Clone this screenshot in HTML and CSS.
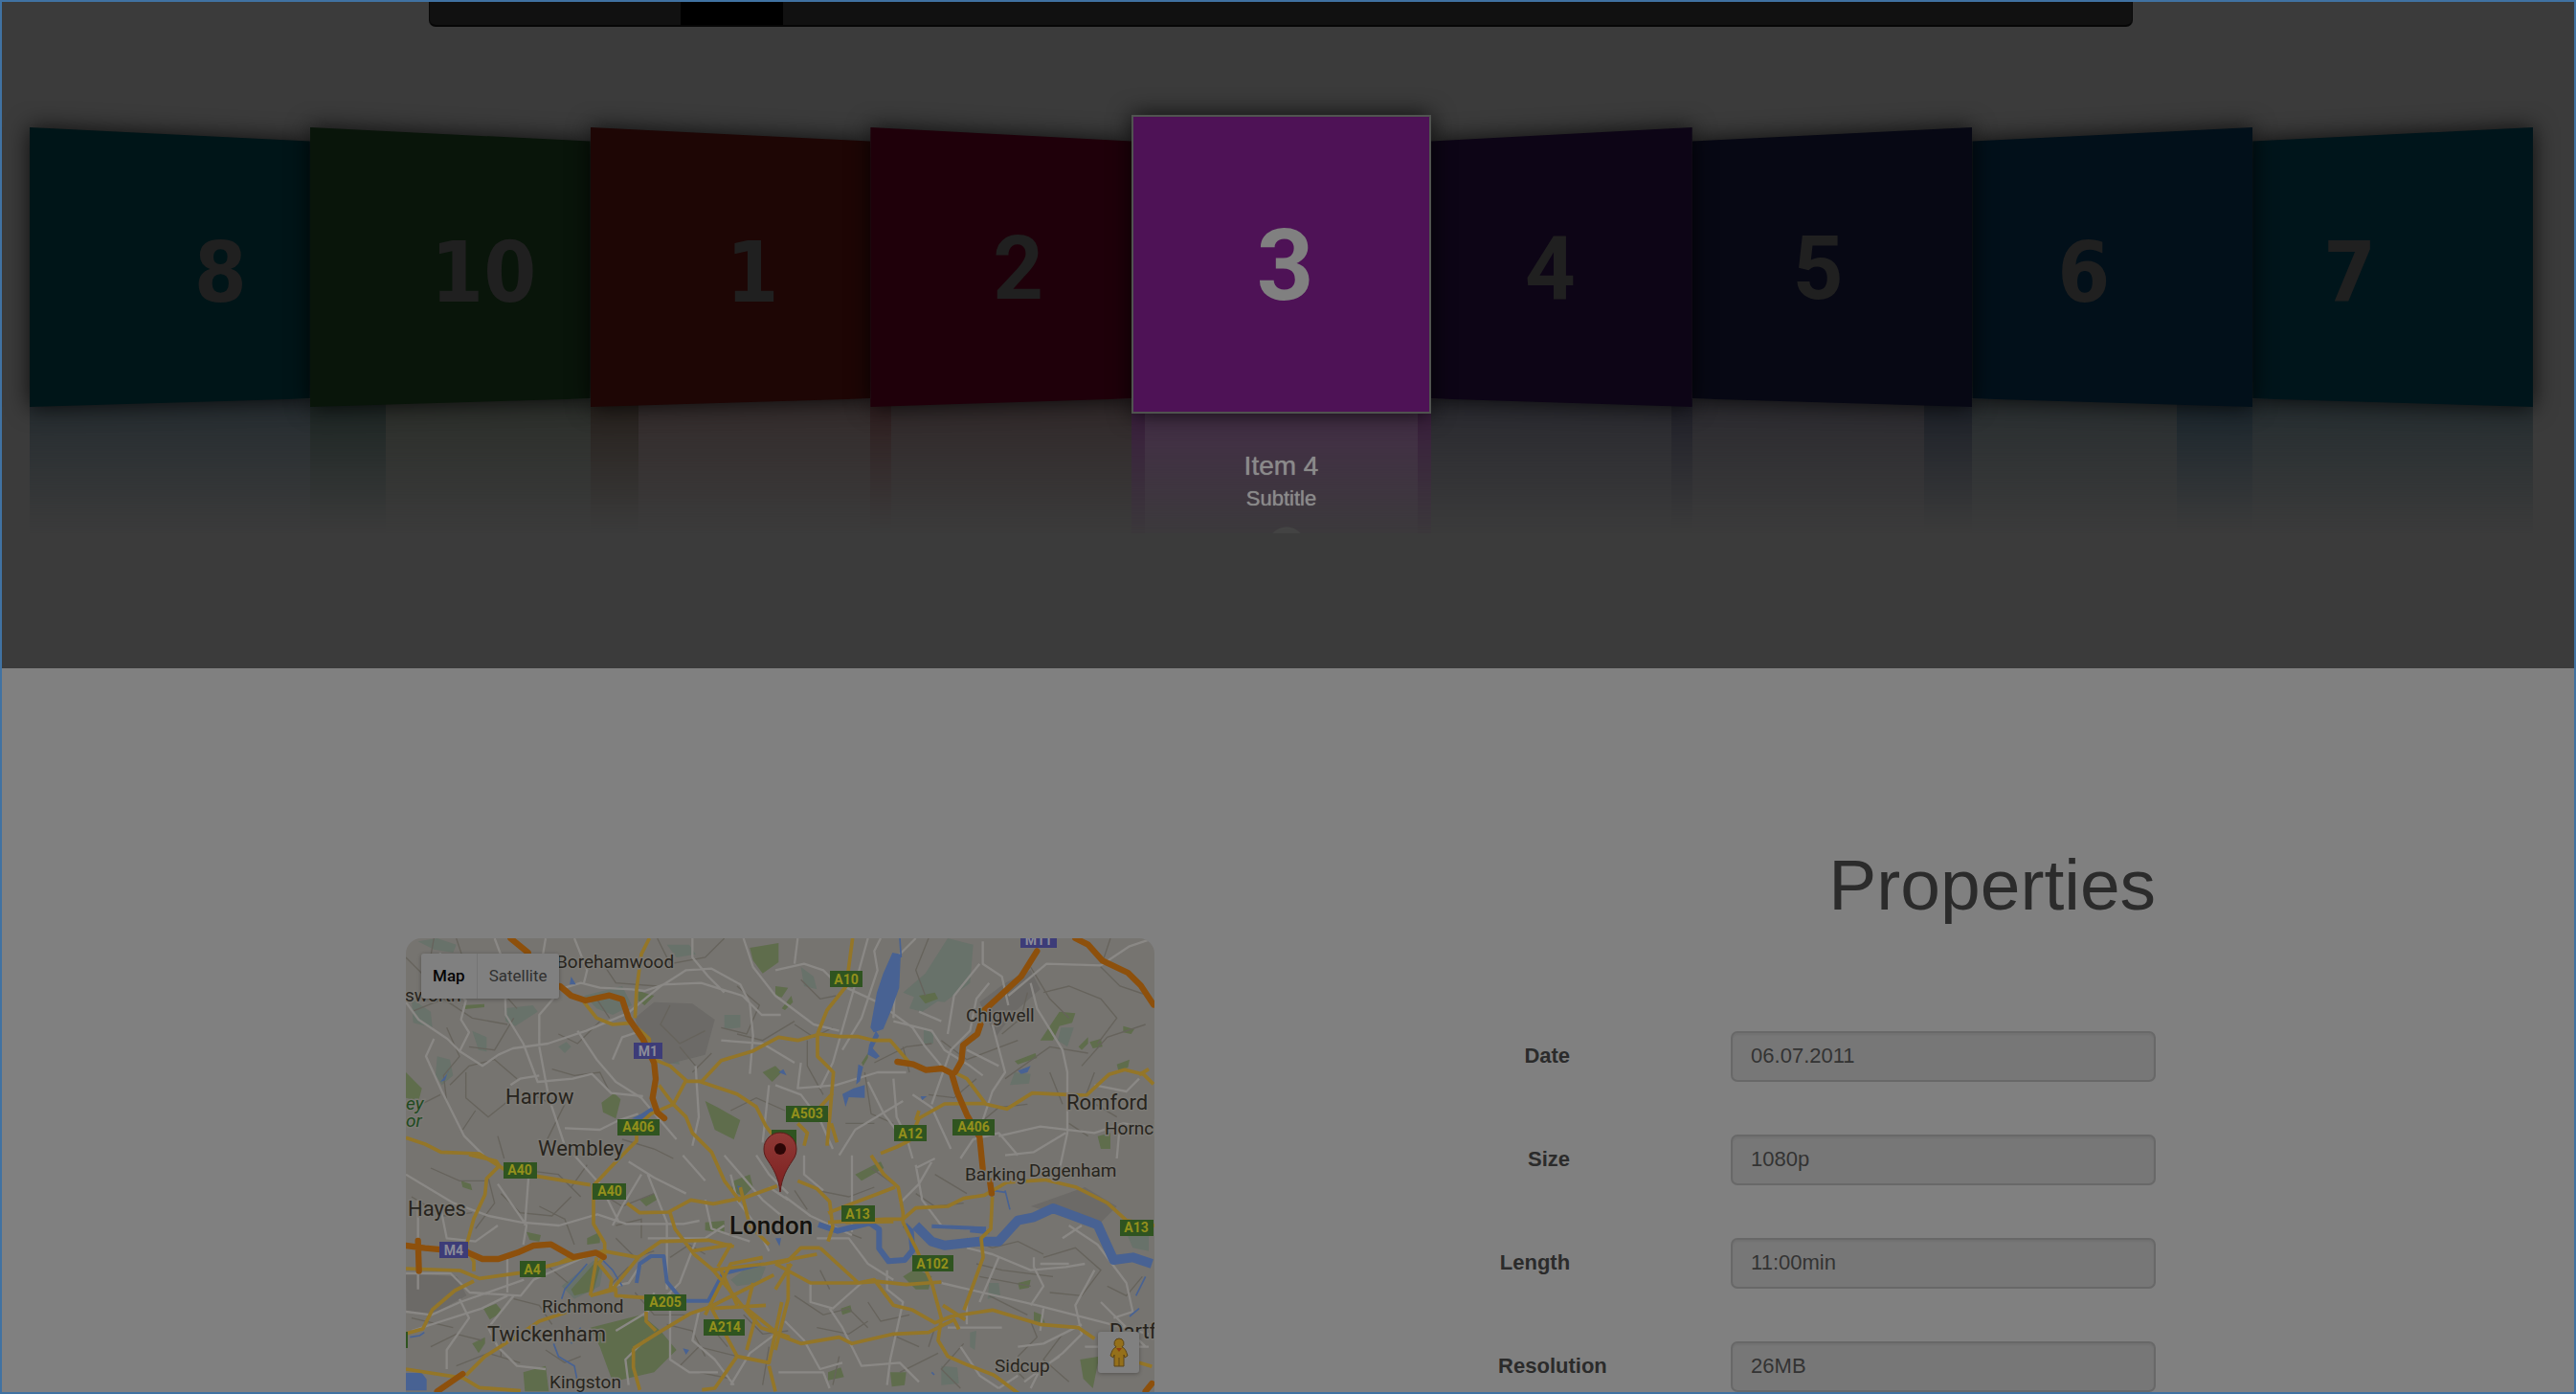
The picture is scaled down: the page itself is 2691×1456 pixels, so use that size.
FILE: index.html
```html
<!DOCTYPE html>
<html lang="en">
<head>
<meta charset="utf-8">
<title>Properties</title>
<link rel="stylesheet" href="styles.css">
</head>
<body>
<header class="hero">
  <nav class="navbar" aria-label="Main"><span class="navbar-active"></span></nav>
  <div class="coverflow">
    <article class="cover left far c8"><div class="shade"><div class="face">8</div></div><div class="reflection"></div></article>
    <article class="cover left mid c10"><div class="shade"><div class="face">10</div></div><div class="reflection"></div></article>
    <article class="cover left near c1"><div class="shade"><div class="face">1</div></div><div class="reflection"></div></article>
    <article class="cover left next c2"><div class="shade"><div class="face narrow">2</div></div><div class="reflection"></div></article>
    <article class="cover current"><div class="shade"><div class="face narrow">3</div></div>
      <div class="reflection"></div>
      <div class="caption"><h2 class="caption-title">Item 4</h2><p class="caption-sub">Subtitle</p></div>
    </article>
    <article class="cover right next c4"><div class="shade"><div class="face narrow">4</div></div><div class="reflection"></div></article>
    <article class="cover right near c5"><div class="shade"><div class="face narrow">5</div></div><div class="reflection"></div></article>
    <article class="cover right mid c6"><div class="shade"><div class="face">6</div></div><div class="reflection"></div></article>
    <article class="cover right far c7"><div class="shade"><div class="face">7</div></div><div class="reflection"></div></article>
  </div>
</header>
<main class="details">
  <section class="map" aria-label="Map of London">
    <svg class="map-canvas" viewBox="0 0 782 476" preserveAspectRatio="xMidYMin slice">
      <defs>
        <linearGradient id="pin" x1="0" y1="0" x2="0" y2="1"><stop offset="0" stop-color="#8f3a36"/><stop offset="1" stop-color="#7d1f1f"/></linearGradient>
      </defs>
      <g transform="scale(.333333) translate(-42 -60)">
        <!-- parks -->
        <g class="wood">
          <path d="M80 70l60-10 60 20-10 25-60-10zM60 250l60 40 5 50-60-15zM350 280l90-10 15 20-70 45-30-15zM600 240l120-30 30 60-60 30-50-20zM250 350l45 20 0 45-25-5zM140 430l40 10 10 50-35 30-20-30zM520 400l25-15 15 15-20 20zM860 80l70 0 20 30-60 10zM1040 300l50 0 0 40-50 5zM850 410l40 15 10 30-40-5z"/>
          <path d="M1740 60l80 20-10 120-80 60-80-10-50-20 70-60zM1640 230l70-10 10 30-60 40-40-10zM2095 340l40 0-20 60-30-20zM1950 480l50 5-5 30-60 5zM1665 340l30 20 0 30-30 0zM1280 150l40 30 10 40-40-10z"/>
          <path d="M530 1150l100-80 30 20-10 60-80 40zM1060 1130l60-45 50 5-20 50-70 10zM1870 1140l30 0 5 40-40 10zM1810 1295l20-5-5 60-15-10zM1720 1400l50 5 5 50-55 5zM2290 960l80 0 0 80-50-10z"/>
        </g>
        <g class="park">
          <path d="M42 480l50 50-10 40-40-10zM220 270l68-4 0 10-60 6zM1120 90l90-15 0 60-50 35-30-40zM770 225l50 15-30 30-20-15zM655 575l40-30 20 20-15 60-40-20zM980 570l40 20 70 40-20 60-60-30zM1160 480l40-20 20 20-30 30zM1200 210l40 5-20 30-20-5zM1220 280l30-40 5 20-25 25zM1650 240l50-10 10 20-40 15z"/>
          <path d="M2030 380l60-90 50 5-10 30-40 10-20 45zM1950 445l65-25 5 15-60 20zM2290 335l35 10-10 15-25-5zM2185 385l35-10 5 25-30 5zM2270 455l40-15-5 25-30 10zM2150 400l30-30 0 20-20 20zM1470 450l20-30 0 15-15 25zM2210 680l40-10 0 50-30 0z"/>
          <path d="M560 1160l80-90 15 5-25 90-60 15zM620 1280l160-40 60 50 50 60-70 70-130 30-40-110zM980 950l60-5 0 40-60-10zM1070 820l50-20 10 40-30 30-40-20zM285 1220l40-15 20 25-40 25zM410 1420l70-20 10 80-75 0zM250 1330l40-20 0 20-20 30zM610 1000l40-20 0 35-40 5zM215 820l30 10 5 20-30-10zM420 980l45 10-5 20-30-5zM775 880l45-20 15 15-40 25z"/>
          <path d="M1600 1120l40-25 50 25-10 40-40 0zM1960 1140l40-10-5 25-30 5zM1405 1220l30-10 5 20-30 10zM1365 1420l40-15 10 30-50 10zM1560 1420l50 0-5 40-40 5zM2010 1230l25 10 10 25-35-5zM2155 1380l60-10-20 100-30-30zM1450 800l80-40 10 20-70 40z"/>
        </g>
        <path class="pale" d="M760 310l60-50 120 5 70 50-30 110-120 30-80-80zM1840 260l80-60 80-40 30 60-80 70-60 80zM42 1110l160 10 30 60-110 60-78-10zM2000 900l170-60 100 60-60 60z"/>
        <!-- minor streets -->
        <path class="lane" d="M42 120l60 60 90 20M200 60l30 90 80 40 80 90M130 60l-20 110M60 290l100-40 90 60 110 20M170 340l40 90-50 60 10 80M380 310l-60 100-80-10M520 360l60 30 70-70M500 470l70 20 80-10 30 60M180 520l60-60 80-20 70 60M230 480l0 80 70 60 100-80M260 600l-40 60M420 540l60 30 80-10M480 700l60-120M90 580l60-30M640 110l60 90 130 10M830 60l40 80 110-20 60-60M870 270l-30 60 60 60 80-40M900 400l50 60M1080 210l70 60-40 90-80-20M1080 360l80 20 100-60M1000 420l-60 60M1060 600l80-40 90 40M720 690l100 30 60 30M330 680l20 70M640 250l40 60"/>
        <path class="lane" d="M1280 190l60 60 50-10M1300 380l0 80 50 90M1510 450l100-50 80-10M1480 480l20 130 70 30M1260 330l60 40 60-30M1600 400l20 80M1680 60l-40 100 30 80M1920 500l140-100 120 20M2000 150l60 100 60 60M2040 230l80-20 100 40 50 60-60 80M2250 60l-30 90 60 60 90 30M2060 480l40 100M2160 460l80-90 120-40M1990 230l-20 80-60 50M1720 380l80 60 160-60M1840 640l60-50 90-10M2200 480l-30 80 100 60M1420 640l90 0M1830 500l-70 60-80-10M2120 640l60 40"/>
        <path class="lane" d="M60 870l100 60 90-10M120 780l90 40 80 0M300 810l20 80-60 80M340 860l60 60 100 10 60-60M440 790l80 10 70 70M460 900l80 40 30 80M560 840l50-70M640 850l80 50 100-40M700 1000l60 60 60-20M700 960l80-20 0 60M420 1110l70-20 60 50M380 1190l80 20 40 60M60 1250l130 30M120 1340l80-40 80 20M200 1400l100-40 100 30M340 1280l0 90M480 1350l60 40 50-20M680 1150l60-60M760 1170l60 70 100 0M870 1060l60-40 50 30M860 1270l80 20 40 80M900 1400l60-60 120 30M1000 1280l50 60M1100 1240l60 60 80-10M1180 1340l-20 120M960 1420l100 20"/>
        <path class="lane" d="M1260 850l40 60M1330 850l100 20 80-30M1370 960l100 40M1500 780l70 50M1640 860l60 40 90-10M1700 800l100 60M1800 1000l80 30 80-20 80 40M1830 1080l80 20 160 20M1840 1120l160 30M1870 1180l120 60M2040 1060l100-30 80 70-60 80-100-10M2240 1150l60 30 50-60M1650 1140l80 0M1260 1180l90 60 80-20 60 60M1330 1280l100 20 60-40M1490 1200l40 60 90-20M1560 1300l90 40M1400 1370l-20 90M1590 1420l120-60M1700 1280l-20 60M1790 1330l-70 80 60 60M2000 1260l20 50-60 60M2100 1300l-60 80 80 70M2220 1300l50 20 60-20M1920 1380l60 60M1340 1100l30 60"/>
        <!-- secondary streets -->
        <g class="street">
          <path d="M42 260l40 55 90 60 40 40 70 45 50-35 45-20 110-15 120-40 130-55 60-50 50-40 120-5 130 40 60 60 60 0M130 375l-25 55 50 110 70 140 60 60M210 415l30-60-25-40 15-60-90-90 10-60M320 60l30 80 5 160 55 90 45 120 110-10 60-15 60 60 100 10M460 390l0-90 60-70M460 400l30 160 50 150M370 520l30-20 60-10M540 215l50-15 60 15 100 5 40 5 60-20 70-45 80-5 90 50 30 60 10 100-10 120M600 200l10-40-40-100M940 60l0 60 50 60 50 50M690 440l30-70 60-20M480 60l-10 60-80 60"/>
          <path d="M580 350l60 90 60 70 80 50 50 60 60 70M540 655l110 5 60-30 60-20M1030 380l130 10 100 60M1180 520l-20 180M950 460l10 160-20 90M1100 60l30 90 70 90 120 90 80 20M1200 160l90-20 60 20 40 40 130 60 110 80 40 60 50 60M1270 60l-10 80M1490 60l-50 180-60 210-40 80M1530 60l-20 40 10 60-50 150-60 100M1640 60l-60 60-10 190M1570 320l120 30 40 60 80 50 40 30M1650 290l70 30M1850 70l0 70 60 40 20 90M1740 360l20-120 80-100M1870 200l-40 50-20 100-60 60-60 170M1930 240l120-100 170 5 90-60 60-20"/>
          <path d="M2000 200l20 80 80 130 15 70 0 190-30 140M1880 330l40 150-40 60-30 90M1800 410l100 50M1280 450l-10 80 120-10 130-40 90 0M1200 520l80 30 60 80 40 90M1570 500l10 120 30 60 20 70M1630 550l60 40 60 130M1490 510l50 100 60 80M1960 740l-60-70-80 20-40 60M1900 680l130-30 170 20 90-30 80 10M2110 670l-100 60-90 10M1400 740l50-80 150-90M2280 640l-10 110M2200 520l100 20 40-40"/>
          <path d="M42 800l50 30 100 60 110 40 100 20 120 10 120-35 90 30 180 0 50-10M330 830l90 130-10 60M430 760l-15 200M80 880l0 280M150 900l20 100 90 10 70-50M42 1110l140 0 60 60 160 10 40-50 180-80M42 1230l80 10 90-40 200-70M210 1190l30 60-70 100 0 60M60 1290l220-70 80-40M380 1180l-80 100 30 60 60 60 90 10M360 1050l0 120M570 740l80 90 60 120M780 800l-60 100-30 60M800 800l60 150 0 210M740 760l80 50 100 50M690 1150l50-10 40-60M800 1000l180 0 60-40M950 1010l-50 130-40 40M700 1290l100-60 20-60M740 1460l-10-80 60-60"/>
          <path d="M870 1170l0 210 60 40 90 0M960 1230l-20 90 70 60 60 80M980 880l20 90 120 40M1180 840l60 40M1200 1300l-80 60-60 100M1060 800l20 80 60 80 40 80M1040 740l120 140 60 50M1140 740l40 60 60 60M910 740l70 80"/>
          <path d="M1290 740l0 60 60 50M1440 740l0 240M1230 870l80 60 130 60M1330 1000l100 0 60 80 80 50M1310 1140l0 60 70 20 90-80M1550 1100l0 60 50 40-40 180-10 80M1230 1260l60 60 50 90 70-20M1370 1220l40 60 60 120 120-10 60 60M1640 780l60-30M1640 770l20 110 60 80 90 10M1800 1030l80 20 120 50 110-10 60-10M1720 1140l300 70 350 90M2010 1060l0 30 30 60-40 60M1800 1270l0-70M1740 1280l170 0M1900 1060l-60 140M2030 1080l90 0M2120 960l90 60 90 120 20 90-60 20M2200 1100l-60 110 20 90-60 60-120 90M2220 1200l80 80 60 60M2040 1220l-10 70M1780 1340l60 90 60 40M1960 1340l80-10 120-60M1210 1420l140 0 20 50M2170 1340l200 0M2000 1470l30-60 60-40M1900 1470l60-40M2100 1000l60-40M1690 760l-40 70-60 60"/>
        </g>
        <!-- water -->
        <g class="water">
          <path d="M1567 105l26 5-5 105-25 70-25 60-30 10-10-15 20-110 20-60zM1515 350l10 15-20 40 22 25-12 8-26-14 5-30zM1460 455l15 8-10 45-12 10zM1445 530l35-10 0 40-50-2-10 30-10-40zM1225 470l10 20-25-10zM150 510l25-30 0-5-10 30zM780 610l30-20 10 10-30 30-40-5zM560 180l15 25-20 0zM1960 475l40-15-10 20-20 5zM1655 555l20 0-15 12zM42 1422l50 0 15 20 0 35-65 0zM910 1345l20 5-10 15zM1200 1000l18 0-5 25zM1080 835l15 5-10 10z"/>
        </g>
        <g class="stream">
          <path d="M1590 60l4 60M560 1330l30-50M530 1190l10-30 70-80M660 1070l30 30 30 50"/><path d="M505 1330l15 40 50 30 10 50"/><path d="M1690 1420l8 8M2360 1120l-30 60M2340 1220l-30 25M1920 850l15 60M1880 850l40 6"/><path d="M55 1310l30-5 15-10"/>
          <path class="creek" d="M765 1140l10-60 35-24 40 0 10 80 50 60 80 0 45-85 120-30M1690 962l170 8M1810 976l60 6"/>
          <path class="river" d="M1335 957l60 20 60-15 40-10 30 20 0 60 30 40 50-4 25-30-5-60-20-20"/>
          <path class="estuary" d="M1640 960l50 50 40 12 110-12 60 0 60-66 50-10 60-28 60 22 80 30 50 110 60-8 60 20"/>
        </g>
        <!-- A roads -->
        <g class="road">
          <path d="M805 60l-25 50-15 110-5 90M600 260l40 50 50 20 60-5 55 50 0 35M820 440l50 20 50 45-40 75-30-40-15-20M880 580l-70 30-45 40 0 45-55 55-80 85 0 120 35 60 0 40M880 580l40 40 20 50 60 60 40 90 50 65M920 508l50 0 60-65 100-30 80-43 60 10 70-20 60 8 60 0 50 12 50 0 60 70M960 508l60 20 60 20 60 40 30 60 30 40M42 685l60 20 50 25 120 5 80 50 30 5M1442 60l-20 150-60 75-30 75 0 70 50 50-10 120-10 110M1330 600l50-55M1270 640l30 30-10 40M1375 640l18 60M1770 485l30 15 60 80 65 15 80-50 110 5 60 2 70-65 50-15 60 15 30 30M2370 470l-30 18M1650 600l-10 30M1860 577l-130 2-80 45-30 70-40 20-50 20"/>
          <path d="M240 738l85 20 10 15-40 40-5 50-35 75-25 90 25 45 0 30M450 805l170 28M735 890l40 30 90-2 70-38 70 12 40-8 60-12 100-36M1270 820l60 25 40 40 10 80-15 45M1365 950l180-10 55 0 40-35 100-5 50-25 65-10 70-40 120-8 95 22 100 50 60 55 110 20M1880 870l-5 100-30 30 6 60-60 165M1500 740l40 60 45 40 15 80 0 30 40 80 50 110 30 110-10 70 30 50 55 24 90 35 80 60 60 40M1365 920l210-80M1420 950l150-2M42 1095l170 6 60 25 130-18 120-30 40-20M255 1134l-60 30-70 60-30 60-53 15M480 1090l70-20 110-30 110 20 70-50 150-4 80 20M665 1050l-18 30 40 50-5 30-60 20M640 1060l-20 120M685 1165l90-110M620 1180l80-20 0 20 90 6M795 1230l0 30 30 30M870 920l15 50 60 80 60 50 90 110 60 70 90 30M1090 840l30 120 60 60M940 1040l120-20-40 70M1000 1100l170-20 160-30M980 1240l80-160 100-20M1000 1220l170-10"/>
          <path d="M42 1410l180 28 50 30 130 10M230 1430l60-60 110-70 60-40 90-30M755 1345l80-50 100-60 60-20 160-80 40-20M755 1345l0 60 20 70M1000 1220l80 150-70 100-40 5M1080 1370l100 20 40-190M1140 1240l-30 110M1110 1220l100 80M1030 1100l50 110M1130 1140l-20 80M1200 1300l80 30 120-20 40 20 130-30 110-5 80-40 15 30M1340 1030l120 110 50-10 60 80 60 15 70 40 50-20 130-20 150 45 120 10 50 35M1340 1030l-60 0-40 40-40 10M1200 1080l110 60 150 0 60-5 90 10 110-8M1725 1210l70 45M1240 1080l0 110-40 160M1200 1160l50-80M1180 1400l20 80M2340 1390l40 12"/>
        </g>
        <g class="motorway">
          <path d="M370 60l55 45M525 210l35 30 45 15 75-16 40 12 20 60 45 65 35 75 5 50-10 60 15 45 22 18M2020 100l-50 80-120 110M1843 330l-10 30-45 35-5 50-20 35M2140 60l40 20 45 50 80 38 40 40 40 60M1582 447l50 8 40 18 50-5 30 15 18 60 30 70 40 70 10 100M1872 820l6 40M42 1023l60 8 130 12 50 22 50 0 60-20 50-22 55-4 70 40 70-14 25 14M80 1008l3 95M140 1480l80-55M2360 1480l20-25"/>
        </g>
      </g>
      <g class="label">
        <text x="157" y="31">Borehamwood</text><text x="-1" y="66">sworth</text><text x="585" y="87">Chigwell</text><text x="730" y="205">Hornch</text><text x="142" y="391">Richmond</text><text x="150" y="470">Kingston</text><text x="584" y="253">Barking</text><text x="651" y="249">Dagenham</text><text x="615" y="453">Sidcup</text>
        <g class="town"><text x="104" y="173">Harrow</text><text x="138" y="227">Wembley</text><text x="690" y="179">Romford</text><text x="2" y="290">Hayes</text><text x="85" y="421">Twickenham</text><text x="735" y="418">Dartf</text></g>
        <text class="city" x="338" y="309">London</text>
        <g class="green"><text x="0" y="179">ey</text><text x="0" y="197">or</text></g>
      </g>
      <g class="shield">
        <g class="m"><rect x="238" y="109" width="30" height="17"/><text x="253" y="123">M1</text><rect x="642" y="-7" width="38" height="17"/><text x="661" y="7">M11</text><rect x="35" y="317" width="30" height="17"/><text x="50" y="331">M4</text></g>
        <rect x="221" y="189" width="44" height="17"/><text x="243" y="202">A406</text>
        <rect x="443" y="34" width="34" height="17"/><text x="460" y="48">A10</text>
        <rect x="397" y="175" width="44" height="17"/><text x="419" y="188">A503</text>
        <rect x="510" y="195" width="34" height="17"/><text x="527" y="209">A12</text>
        <rect x="571" y="189" width="44" height="17"/><text x="593" y="202">A406</text>
        <rect x="382" y="200" width="26" height="17"/>
        <rect x="102" y="234" width="35" height="17"/><text x="119" y="247">A40</text>
        <rect x="195" y="256" width="35" height="17"/><text x="213" y="269">A40</text>
        <rect x="119" y="337" width="27" height="17"/><text x="132" y="351">A4</text>
        <rect x="249" y="372" width="44" height="17"/><text x="271" y="385">A205</text>
        <rect x="311" y="398" width="43" height="17"/><text x="333" y="411">A214</text>
        <rect x="455" y="279" width="35" height="17"/><text x="472" y="293">A13</text>
        <rect x="529" y="331" width="43" height="17"/><text x="550" y="345">A102</text>
        <rect x="746" y="294" width="35" height="17"/><text x="763" y="307">A13</text>
        <rect x="-2" y="411" width="4" height="17"/>
      </g>
      <path class="pin" d="M391 265c-2-16-7-24-13-33-3-4-4-8-4-12a17 17 0 0 1 34 0c0 4-1 8-4 12-6 9-11 17-13 33z"/>
      <circle class="pin-dot" cx="391" cy="220" r="6"/>
    </svg>
    <div class="map-type"><button class="map-btn on" type="button">Map</button><button class="map-btn" type="button">Satellite</button></div>
    <button class="pegman" type="button" aria-label="Street View"><svg width="20" height="32" viewBox="0 0 20 32"><path d="M10 1a5 5 0 0 1 3 9c3 1 4 3 6 9l-3 2-1-3v12H5V18l-1 3-3-2c2-6 3-8 6-9a5 5 0 0 1 3-9z" fill="#95701a" stroke="#5c4517"/><path d="M7 11l3 4 3-4z" fill="#8a3d12"/><path d="M10 21v9" stroke="#5c4517"/></svg></button>
  </section>
  <form class="props">
    <h1 class="props-title">Properties</h1>
    <div class="row"><label class="row-label" for="date">Date</label><input class="row-input" id="date" value="06.07.2011" readonly></div>
    <div class="row"><label class="row-label" for="size">Size</label><input class="row-input" id="size" value="1080p" readonly></div>
    <div class="row"><label class="row-label" for="length">Length</label><input class="row-input" id="length" value="11:00min" readonly></div>
    <div class="row"><label class="row-label" for="resolution">Resolution</label><input class="row-input" id="resolution" value="26MB" readonly></div>
  </form>
</main>
<div class="frame"></div>
</body>
</html>
```
FILE: styles.css
```css
* { box-sizing: border-box; }
body {
  margin: 0;
  background: #808080;
  color: #2b2b2b;
  font-family: "Liberation Sans", Arial, sans-serif;
  font-size: 22px;
}
.frame {
  position: fixed;
  inset: 0;
  border: 2px solid #4072a2;
  pointer-events: none;
  z-index: 20;
}

/* carousel */
.hero { background: #3b3b3b; height: 698px; }
.navbar {
  height: 28px;
  margin: 0 17.2% 0 16.65%;
  padding-left: 262px;
  background: #111;
  border: 1px solid #080808;
  border-bottom: 2px solid #060606;
  border-radius: 0 0 7px 7px;
}
.navbar-active { display: block; width: 107px; height: 100%; background: #000; }
.coverflow {
  display: flex;
  align-items: flex-start;
  padding: 92px 45px 0 31px;
}
.cover { position: relative; flex: 293 1 0; min-width: 0; padding-top: 13px; }
.cover.next { flex-grow: 273; }
.cover.current { flex-grow: 313; padding-top: 0; z-index: 5; }
.next { z-index: 4; }
.near { z-index: 3; }
.mid { z-index: 2; }
.far { z-index: 1; }
.shade { position: relative; z-index: 1; filter: drop-shadow(0 0 12px rgba(0, 0, 0, .8)); }
.face {
  height: 292px;
  padding-top: 108px;
  background: var(--ink);
  color: #202020;
  font: bold 88px/1 "DejaVu Sans Condensed", "DejaVu Sans", sans-serif;
  text-align: center;
}
.face.narrow { padding-top: 102px; font: bold 92px/1 Roboto, sans-serif; }
.left .face { clip-path: polygon(0 0, 100% 5%, 100% 97%, 0 100%); }
.right .face { clip-path: polygon(0 5%, 100% 0, 100% 100%, 0 97%); }
.left.far .face { padding-left: 106px; }
.left.mid .face { padding-left: 70px; }
.left.near .face { padding-left: 46px; }
.left.next .face { padding-left: 36px; }
.right.next .face { padding-right: 24px; }
.right.near .face { padding-right: 30px; }
.right.mid .face { padding-right: 60px; }
.right.far .face { padding-right: 90px; }
.current .face {
  height: 312px;
  padding: 104px 0 0 8px;
  background: #4e1256;
  border: 2px solid #505350;
  color: #808080;
  font-size: 104px;
}
.c8 { --ink: #001518; --glow: #252c30; --overlap: #252c30; --edge: 0%; }
.c10 { --ink: #09150a; --glow: #2b2e2a; --overlap: #1c2523; --edge: 27%; }
.c1 { --ink: #1e0605; --glow: #332b2b; --overlap: #26201c; --edge: 17%; }
.c2 { --ink: #1f000a; --glow: #302829; --overlap: #2e1d1e; --edge: 8%; }
.c4 { --ink: #0d0516; --glow: #29292f; --overlap: #1f1f28; --edge: 8%; }
.c5 { --ink: #070814; --glow: #2b2a2f; --overlap: #1c2028; --edge: 17%; }
.c6 { --ink: #02101a; --glow: #292e30; --overlap: #1a252c; --edge: 27%; }
.c7 { --ink: #00151b; --glow: #252d30; --overlap: #252d30; --edge: 0%; }
.reflection {
  height: 140px;
  margin-top: -8px;
  background: linear-gradient(to right, var(--overlap) var(--edge), var(--glow) var(--edge));
  mask-image: linear-gradient(#000, transparent);
}
.right .reflection { background: linear-gradient(to left, var(--overlap) var(--edge), var(--glow) var(--edge)); }
.current .reflection {
  height: 133px;
  background:
    radial-gradient(circle 20px at 162px 146px, #808080 19px, transparent 20px),
    linear-gradient(to right, #3a1e3d 14px, #442e47 14px, #442e47 calc(100% - 14px), #3a1e3d calc(100% - 14px));
  mask-image: linear-gradient(#000, rgba(0, 0, 0, .1));
}
.caption {
  position: absolute;
  inset: 350px 0 auto;
  z-index: 2;
  text-align: center;
  color: #8a8a8a;
  text-shadow: 0 0 1px #8a8a8a;
}
.caption-title { margin: 0; font-size: 28px; font-weight: 400; line-height: 34px; }
.caption-sub { margin: 0; font-size: 22px; line-height: 34px; }

/* details */
.details {
  display: grid;
  grid-template-columns: 782fr 687fr;
  column-gap: 19.64%;
  align-items: start;
  padding: 0 16.31% 0 15.76%;
}
.map { position: relative; margin-top: 282px; border-radius: 16px 16px 0 0; overflow: hidden; background: #767470; }
.map-canvas { display: block; width: 100%; height: 476px; font-family: Roboto, sans-serif; }
.wood { fill: #68726a; }
.park { fill: #5f6d4c; }
.pale { fill: #6c6a67; }
.lane { fill: none; stroke: #66635c; stroke-width: 4; }
.street { fill: none; stroke: #8a8885; stroke-width: 7; stroke-linejoin: round; }
.water { fill: #486293; }
.stream { fill: none; stroke: #486293; stroke-width: 5; stroke-linejoin: round; }
.creek { stroke-width: 12; }
.river { stroke-width: 18; }
.estuary { stroke-width: 30; }
.road { fill: none; stroke: #947628; stroke-width: 11; stroke-linejoin: round; }
.motorway { fill: none; stroke: #8d500c; stroke-width: 19; stroke-linejoin: round; stroke-linecap: round; }
.label { font-size: 19px; fill: #27241d; stroke: #7b7974; stroke-width: 3px; paint-order: stroke; }
.town { font-size: 22px; }
.city { font-size: 26px; font-weight: 500; fill: #14120e; }
.green { fill: #1f4a1f; font-style: italic; }
.shield { font-size: 14px; font-weight: 700; text-anchor: middle; }
.shield rect { fill: #2f5420; }
.shield text { fill: #93901c; }
.shield .m rect { fill: #3d3c78; }
.shield .m text { fill: #8b8b98; }
.pin { fill: url(#pin); stroke: #5c1c1a; }
.pin-dot { fill: #2c0606; }
.map-type { position: absolute; top: 16px; left: 16px; display: flex; box-shadow: 0 1px 4px rgba(0, 0, 0, .3); border-radius: 3px; overflow: hidden; }
.map-btn {
  height: 47px;
  padding: 0 12px;
  border: 0;
  background: #808080;
  color: #303030;
  font: 17px/47px Roboto, sans-serif;
}
.map-btn.on { border-right: 1px solid #747474; color: #050505; font-weight: 500; }
.pegman {
  position: absolute;
  right: 16px;
  top: 411px;
  display: grid;
  place-items: center;
  width: 43px;
  height: 43px;
  padding: 0;
  border: 0;
  border-radius: 3px;
  background: #808080;
  box-shadow: 0 1px 4px rgba(0, 0, 0, .3);
}
.props { display: grid; padding-top: 182px; }
.props-title { margin: 0 0 108px; font-size: 75px; font-weight: 400; line-height: 88px; text-align: right; }
.row { display: flex; justify-content: space-between; align-items: center; height: 54px; margin-bottom: 54px; }
.row:last-child { margin-bottom: 0; }
.row-label { width: 75px; font-weight: 700; text-align: right; }
.row-input {
  width: 444px;
  height: 53px;
  padding: 0 19px;
  border: 2px solid #686868;
  border-radius: 7px;
  background: #777;
  box-shadow: inset 0 2px 2px rgba(0, 0, 0, .05);
  color: #333;
  font: 22px "Liberation Sans", Arial, sans-serif;
}
```
